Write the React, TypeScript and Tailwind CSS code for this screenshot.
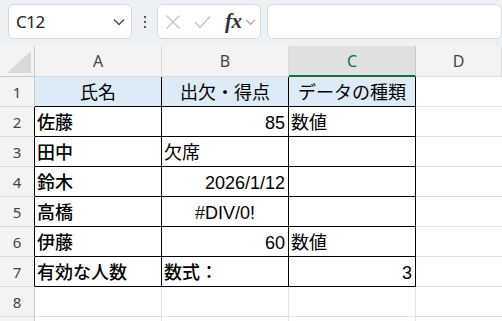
import React from "react"

const cjk = { fontFamily: '"Liberation Sans", "Noto Sans CJK JP", sans-serif' }

type Cell = { text?: string; align?: "left" | "right" | "center"; strong?: boolean }

const rows: Cell[][] = [
  [{ text: "氏名", align: "center" }, { text: "出欠・得点", align: "center" }, { text: "データの種類", align: "center" }],
  [{ text: "佐藤", strong: true }, { text: "85", align: "right" }, { text: "数値" }],
  [{ text: "田中", strong: true }, { text: "欠席" }, {}],
  [{ text: "鈴木", strong: true }, { text: "2026/1/12", align: "right" }, {}],
  [{ text: "高橋", strong: true }, { text: "#DIV/0!", align: "center" }, {}],
  [{ text: "伊藤", strong: true }, { text: "60", align: "right" }, { text: "数値" }],
  [{ text: "有効な人数", strong: true }, { text: "数式：", strong: true }, { text: "3", align: "right" }],
]

function Chevron({ className }: { className?: string }) {
  return (
    <svg width="12" height="8" viewBox="0 0 12 8" className={className}>
      <path d="M1 1.5 L6 6.5 L11 1.5" fill="none" stroke="currentColor" strokeWidth="1.3" />
    </svg>
  )
}

export default function App() {
  return (
    <div className="w-[502px] h-[321px] overflow-hidden bg-white select-none" style={cjk}>
      {/* ── Toolbar ── */}
      <div className="h-[46px] bg-[#eef1f4] flex items-start pt-[4px] pl-[8px]">
        <div className="w-[126px] h-[35px] bg-white border border-[#d5d8dc] rounded-[6px] flex items-center justify-between pl-[7px] pr-[6px]">
          <span className="text-[17px] text-[#222] font-['Noto_Sans'] tracking-tight">C12</span>
          <Chevron className="text-[#444]" />
        </div>
        <div className="w-[26px] h-[35px] flex flex-col items-center justify-center gap-[3px] pl-[1px]">
          <span className="w-[2px] h-[2px] bg-[#555]" />
          <span className="w-[2px] h-[2px] bg-[#555]" />
          <span className="w-[2px] h-[2px] bg-[#555]" />
        </div>
        <div className="w-[106px] h-[35px] bg-white border border-[#d5d8dc] rounded-[6px] flex items-center pl-[7px]">
          <svg width="16" height="16" viewBox="0 0 16 16">
            <path d="M1.5 1.5 L14.5 14.5 M14.5 1.5 L1.5 14.5" stroke="#c4c4c4" strokeWidth="1.3" />
          </svg>
          <svg width="17" height="14" viewBox="0 0 17 14" className="ml-[13px]">
            <path d="M1 7 L6 12.5 L16 1.5" fill="none" stroke="#c4c4c4" strokeWidth="1.3" />
          </svg>
          <span className="ml-[14px] text-[21px] italic font-bold text-[#333] font-['Liberation_Serif'] leading-none tracking-tight">fx</span>
          <Chevron className="ml-[3px] text-[#aaa] w-[11px]" />
        </div>
        <div className="ml-[6px] w-[240px] h-[35px] bg-white border border-[#d5d8dc] rounded-[6px]" />
      </div>

      {/* ── Sheet grid ── */}
      <div className="grid grid-cols-[35px_127px_127px_127px_1fr]">
        {/* header row */}
        <div className="h-[31px] bg-[#f3f3f3] border-r border-b border-[#c9c9c9] flex items-end justify-end pr-[3px] pb-[3px]">
          <svg width="24" height="22" viewBox="0 0 24 22">
            <path d="M24 0 L24 22 L0 22 Z" fill="#d9d9d9" />
          </svg>
        </div>
        {["A", "B", "C", "D"].map((c) => (
          <div
            key={c}
            className={`h-[31px] flex items-center justify-center text-[16px] font-['Noto_Sans'] ${
              c === "C"
                ? "bg-[#e0e0e0] text-[#1e6b41] border-b-2 border-[#1e6b41] border-r border-r-[#c9c9c9]"
                : "bg-[#f3f3f3] text-[#444] border-r border-b border-[#dadada]"
            }`}
          >
            {c}
          </div>
        ))}

        {/* data rows */}
        {[...rows, [{}, {}, {}] as Cell[], [{}, {}, {}] as Cell[]].map((r, i) => {
          const inTable = i < 7
          return (
            <React.Fragment key={i}>
              <div
                className={`h-[30px] bg-[#f3f3f3] flex items-center justify-center pt-[2px] text-[15px] text-[#444] font-['Noto_Sans'] border-b border-[#dadada] border-r ${
                  inTable && i > 0 ? "border-r-black" : "border-r-[#c9c9c9]"
                }`}
              >
                {i < 8 ? i + 1 : ""}
              </div>
              {r.map((cell, j) => (
                <div
                  key={j}
                  className={`h-[30px] flex items-end pb-[1px] text-[18px] leading-[24px] text-black whitespace-nowrap border-r border-b ${
                    inTable ? "border-black" : "border-[#e1e1e1]"
                  } ${i === 0 ? "bg-[#ddebf7]" : "bg-white"} ${
                    cell.align === "right" ? "justify-end pr-[3px]" : cell.align === "center" ? "justify-center" : "justify-start pl-[2px]"
                  } ${cell.strong ? "font-medium" : ""}`}
                >
                  {cell.text}
                </div>
              ))}
              <div className="h-[30px] bg-white border-b border-[#e1e1e1]" />
            </React.Fragment>
          )
        })}
      </div>
    </div>
  )
}
